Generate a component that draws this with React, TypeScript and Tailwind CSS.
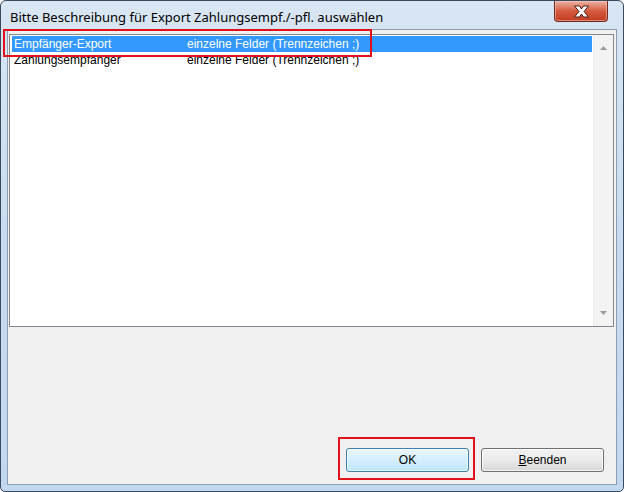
import React from 'react';

const rows = [
  { name: 'Empfänger-Export', desc: 'einzelne Felder (Trennzeichen ;)' },
  { name: 'Zahlungsempfänger', desc: 'einzelne Felder (Trennzeichen ;)' },
];

const CloseButton: React.FC = () => (
  <div className="ml-auto mr-[9px] flex h-[21px] w-[54px] items-center justify-center rounded-b-[4px] border border-t-0 border-[#6e2a1e] bg-gradient-to-b from-[#eab2a4] via-[#d45a3e] to-[#c23c22] shadow-[inset_0_0_0_1px_rgba(255,210,200,0.5)]">
    <svg width="17" height="13" viewBox="0 0 17 13">
      <path
        d="M1.5 1 H6.5 L8.5 4 L10.5 1 H15.5 L11 6.5 L15.5 12 H10.5 L8.5 9 L6.5 12 H1.5 L6 6.5 Z"
        fill="#ffffff"
        stroke="#4a1e16"
        strokeWidth="1"
        strokeLinejoin="round"
      />
    </svg>
  </div>
);

const ScrollBar: React.FC = () => (
  <div className="flex w-[20px] flex-col items-center justify-between bg-[#f3f3f3] border-l border-[#ececec] py-[11px]">
    <svg width="7" height="4" viewBox="0 0 7 4">
      <path d="M3.5 0 L7 4 H0 Z" fill="#9b9b9b" />
    </svg>
    <svg width="7" height="4" viewBox="0 0 7 4">
      <path d="M0 0 H7 L3.5 4 Z" fill="#9b9b9b" />
    </svg>
  </div>
);

const Button: React.FC<{ primary?: boolean; children: React.ReactNode }> = ({ primary = false, children }) => (
  <div
    className={
      primary
        ? 'flex h-[24px] w-[123px] items-center justify-center rounded-[3px] border border-[#3c7fb1] bg-gradient-to-b from-[#eaf6fd] to-[#bee6fd] text-[12px] text-black shadow-[inset_0_0_0_1px_rgba(255,255,255,0.6)]'
        : 'flex h-[24px] w-[123px] items-center justify-center rounded-[3px] border border-[#707070] bg-gradient-to-b from-[#f2f2f2] via-[#ebebeb] to-[#d6d6d6] text-[12px] text-black shadow-[inset_0_0_0_1px_rgba(255,255,255,0.7)]'
    }
  >
    {children}
  </div>
);

export default function App() {
  return (
    <div className="relative h-[492px] w-[624px] overflow-hidden font-['Liberation_Sans',Arial,sans-serif]">
      <div className="flex h-full w-full flex-col rounded-t-[6px] rounded-b-[5px] border border-[#3a4a5c] bg-gradient-to-b from-[#d9e6f3] via-[#c7dbf0] to-[#c2d8ef] px-[6px] pb-[6px]">
        {/* title bar */}
        <div className="flex h-[28px] items-start">
          <span className="pl-[3px] pt-[8px] font-['Noto_Sans',sans-serif] text-[13px] leading-[17px] text-black">
            Bitte Beschreibung für Export Zahlungsempf./-pfl. auswählen
          </span>
          <CloseButton />
        </div>

        {/* client area */}
        <div className="flex flex-1 flex-col border border-[#8a9db3] bg-[#f0f0f0]">
          <div className="ml-[1px] mr-[2px] mt-[4px] flex h-[293px] border border-[#828790] bg-white">
            <div className="flex-1 pl-[2px] pr-[1px] pt-[1px]">
              {rows.map((r, i) => (
                <div
                  key={r.name}
                  className={
                    i === 0
                      ? 'flex h-[16px] items-center bg-[#3399ff] pl-[2px] text-[12px] text-white'
                      : 'flex h-[16px] items-center pl-[2px] text-[12px] text-black'
                  }
                >
                  <span className="w-[173px]">{r.name}</span>
                  <span>{r.desc}</span>
                </div>
              ))}
            </div>
            <ScrollBar />
          </div>

          <div className="flex-1" />

          <div className="flex justify-end gap-[12px] pb-[12px] pr-[12px]">
            <Button primary>OK</Button>
            <Button>
              <span>
                <span className="underline">B</span>eenden
              </span>
            </Button>
          </div>
        </div>
      </div>

      {/* red annotation boxes */}
      <div className="absolute left-[3px] top-[29px] h-[28px] w-[369px] border-2 border-[#e0111b]" />
      <div className="absolute left-[338px] top-[437px] h-[43px] w-[137px] border-2 border-[#e0111b]" />
    </div>
  );
}
